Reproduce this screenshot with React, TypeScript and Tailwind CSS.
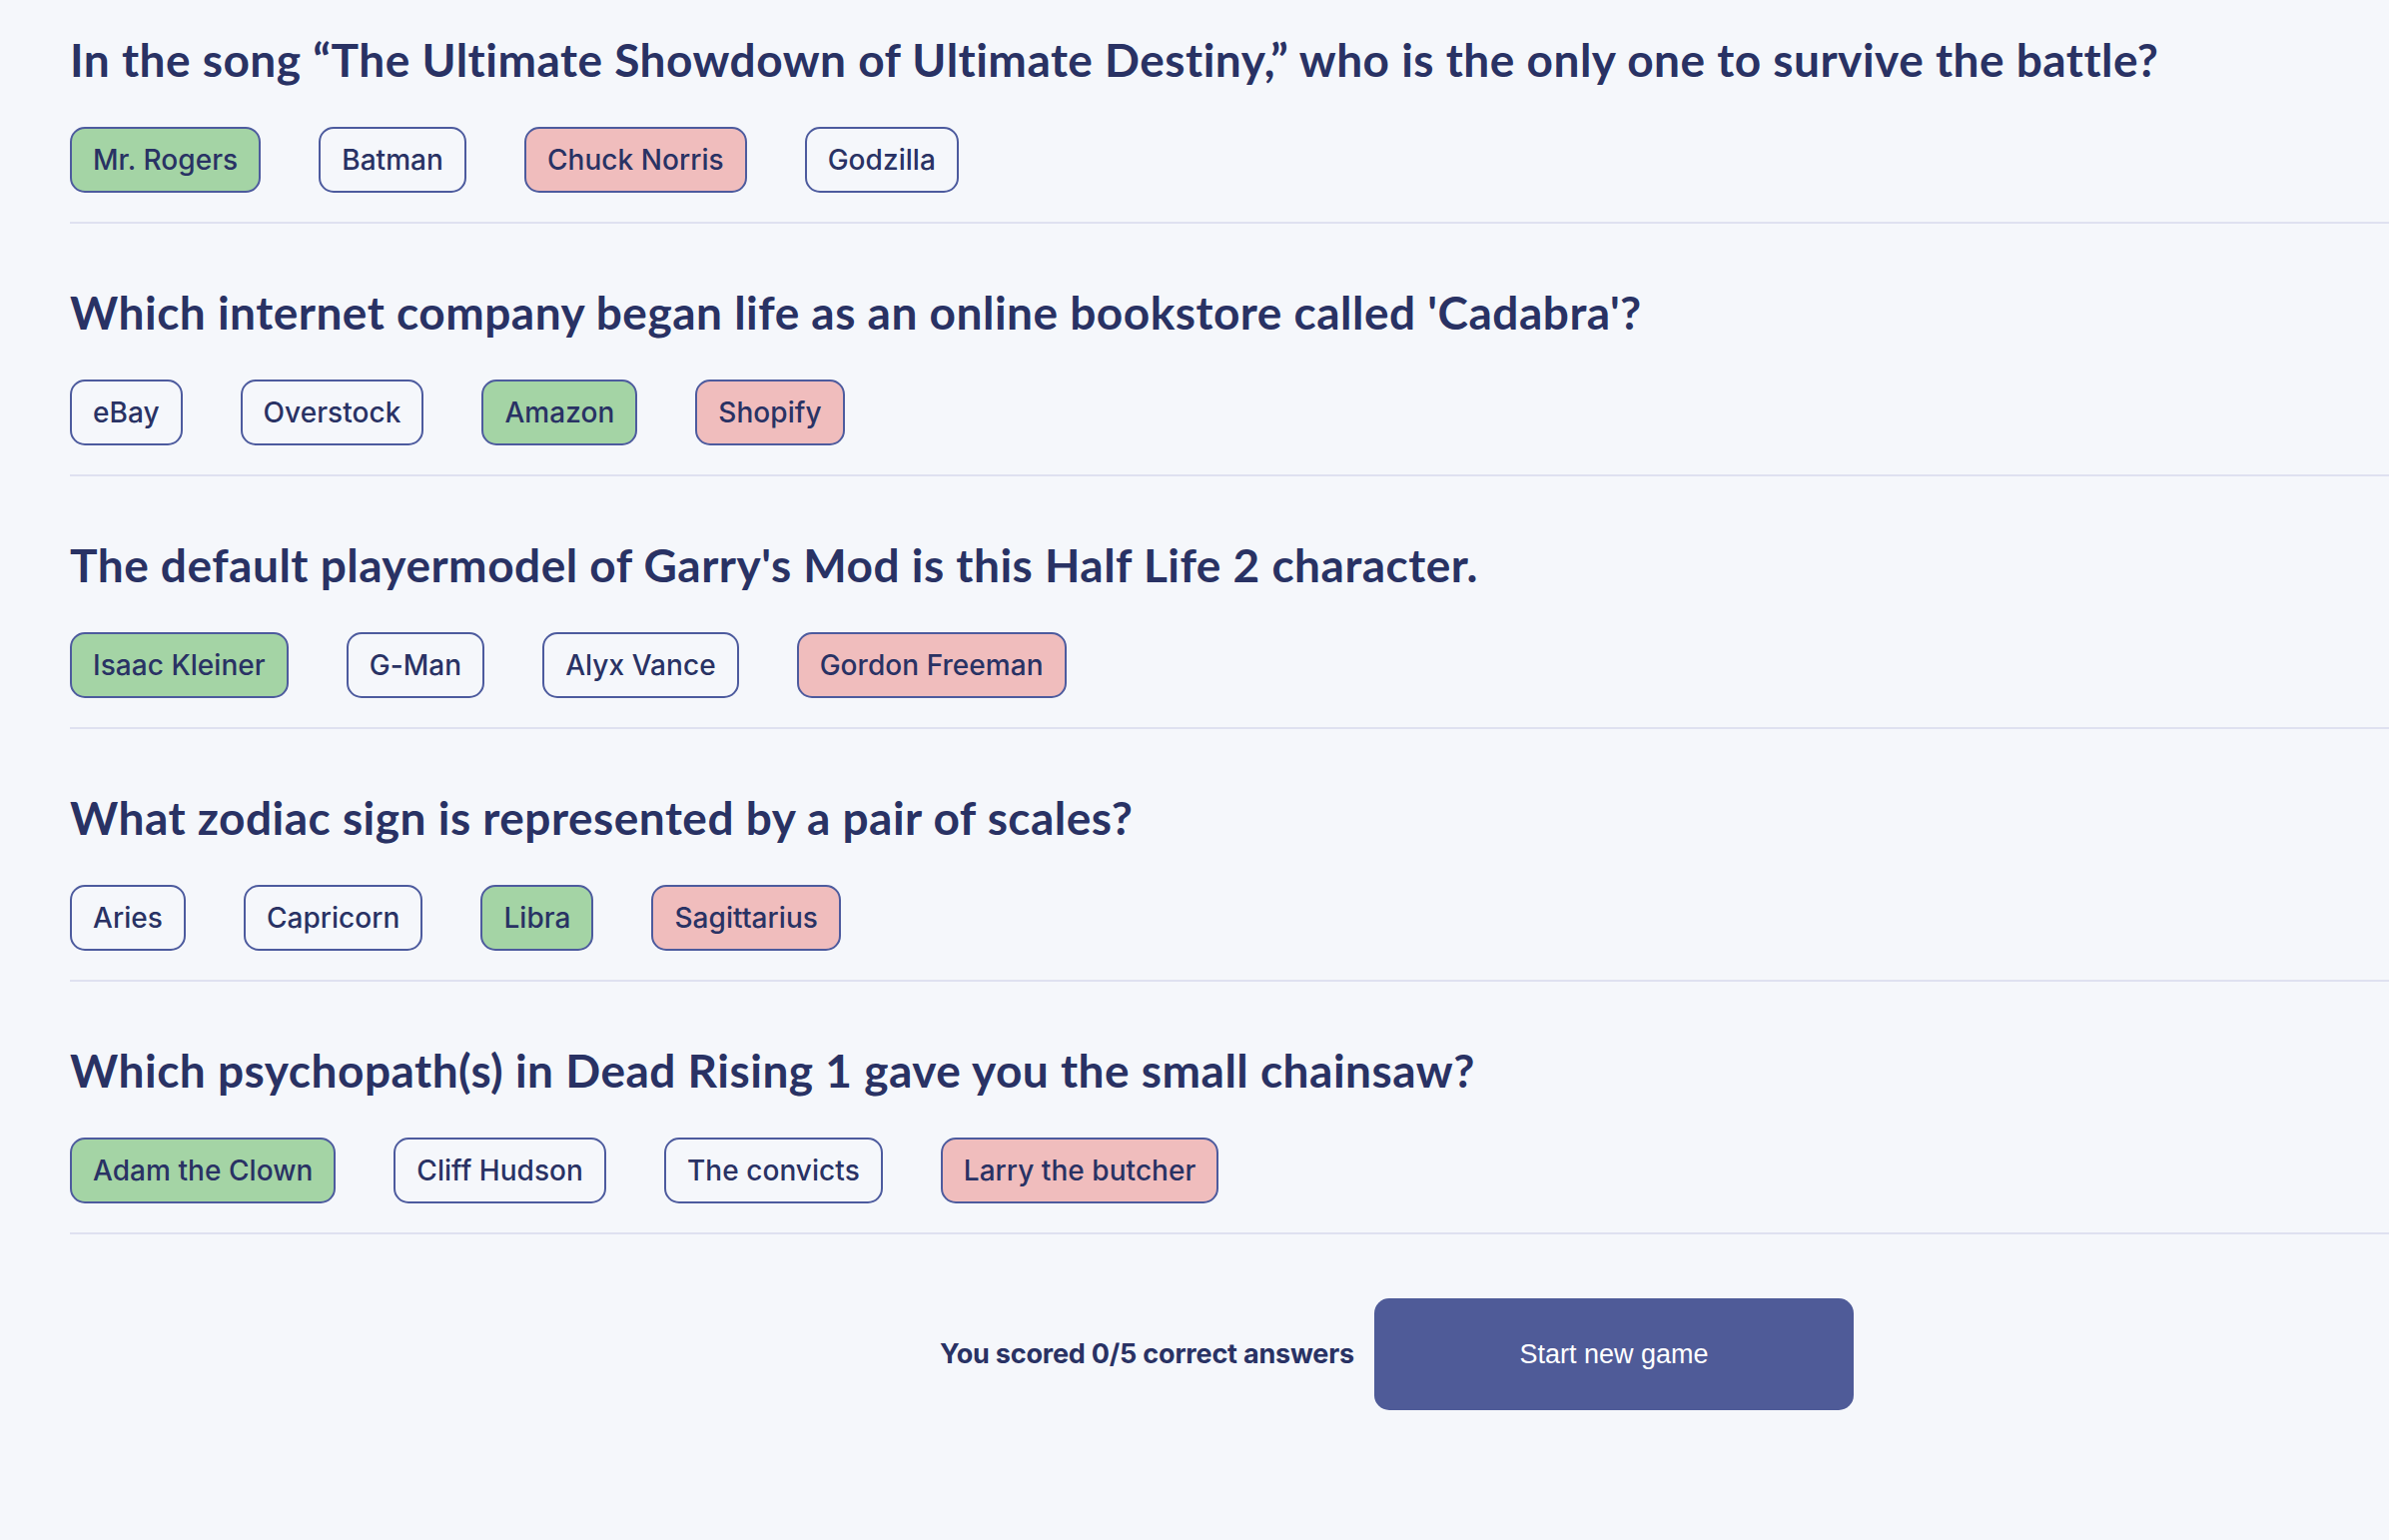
import React from "react";

type Q = { q: string; answers: { t: string; s?: "ok" | "bad" }[] };

const questions: Q[] = [
  {
    q: "In the song \u201CThe Ultimate Showdown of Ultimate Destiny,\u201D who is the only one to survive the battle?",
    answers: [{ t: "Mr. Rogers", s: "ok" }, { t: "Batman" }, { t: "Chuck Norris", s: "bad" }, { t: "Godzilla" }],
  },
  {
    q: "Which internet company began life as an online bookstore called 'Cadabra'?",
    answers: [{ t: "eBay" }, { t: "Overstock" }, { t: "Amazon", s: "ok" }, { t: "Shopify", s: "bad" }],
  },
  {
    q: "The default playermodel of Garry's Mod is this Half Life 2 character.",
    answers: [{ t: "Isaac Kleiner", s: "ok" }, { t: "G-Man" }, { t: "Alyx Vance" }, { t: "Gordon Freeman", s: "bad" }],
  },
  {
    q: "What zodiac sign is represented by a pair of scales?",
    answers: [{ t: "Aries" }, { t: "Capricorn" }, { t: "Libra", s: "ok" }, { t: "Sagittarius", s: "bad" }],
  },
  {
    q: "Which psychopath(s) in Dead Rising 1 gave you the small chainsaw?",
    answers: [{ t: "Adam the Clown", s: "ok" }, { t: "Cliff Hudson" }, { t: "The convicts" }, { t: "Larry the butcher", s: "bad" }],
  },
];

function Answer({ t, s }: { t: string; s?: "ok" | "bad" }) {
  const bg = s === "ok" ? "bg-[#a4d4a5]" : s === "bad" ? "bg-[#f0bdbd]" : "bg-transparent";
  return (
    <div
      className={`h-[66px] flex items-center px-[21px] border-2 border-[#4d5b9e] rounded-[15px] text-[28px] font-medium tracking-[0.05px] text-[#293264] ${bg}`}
      style={{ fontFamily: "Inter, 'Noto Sans', sans-serif" }}
    >
      {t}
    </div>
  );
}

export default function App() {
  return (
    <div className="min-h-screen bg-[#f5f7fb] text-[#293264] overflow-hidden">
      <div className="pl-[70px] pt-[33px]">
        {questions.map((q, i) => (
          <div
            key={i}
            className={`border-b-2 border-[#dfe1f0] pb-[29px] ${i === 0 ? "pt-0" : "pt-[62px]"}`}
          >
            <h2
              className="text-[46px] font-bold leading-[54px] tracking-[0.5px] whitespace-nowrap"
              style={{ fontFamily: "Lato, 'Noto Sans', sans-serif" }}
            >
              {q.q}
            </h2>
            <div className="flex gap-[58px] mt-[40px]">
              {q.answers.map((a, j) => (
                <Answer key={j} t={a.t} s={a.s} />
              ))}
            </div>
          </div>
        ))}
        <div className="flex items-center justify-center pl-[335px] pt-[64px] gap-[20px]">
          <span
            className="text-[27px] font-bold tracking-[-0.2px] text-[#293264]"
            style={{ fontFamily: "Inter, 'Noto Sans', sans-serif" }}
          >
            You scored 0/5 correct answers
          </span>
          <button
            className="w-[480px] h-[112px] rounded-[15px] bg-[#4f5b98] text-white text-[27px]"
            style={{ fontFamily: "'Liberation Sans', Arial, sans-serif" }}
          >
            Start new game
          </button>
        </div>
      </div>
    </div>
  );
}
